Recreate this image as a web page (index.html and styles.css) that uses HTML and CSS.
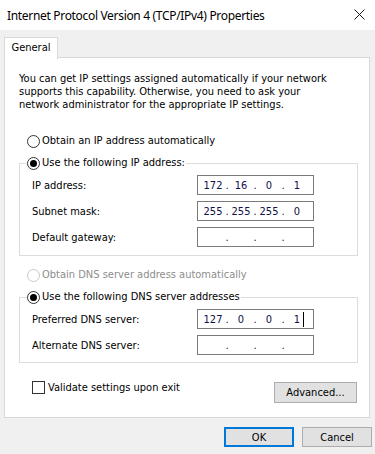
FILE: index.html
```html
<!DOCTYPE html>
<html lang="en">
<head>
<meta charset="utf-8">
<title>Internet Protocol Version 4 (TCP/IPv4) Properties</title>
<link rel="stylesheet" href="styles.css">
</head>
<body>
<div class="window">
  <div class="titlebar">
    <span class="title">Internet Protocol Version 4 (TCP/IPv4) Properties</span>
    <span class="close" aria-label="Close">
      <svg width="11" height="11" viewBox="0 0 11 11"><path d="M0.5 0.5 L10.5 10.5 M10.5 0.5 L0.5 10.5" stroke="#1a1a1a" stroke-width="1" fill="none"/></svg>
    </span>
  </div>
  <div class="body">
    <div class="tabs"><div class="tab">General</div></div>
    <div class="panel">
      <p class="desc">You can get IP settings assigned automatically if your network supports this capability. Otherwise, you need to ask your network administrator for the appropriate IP settings.</p>

      <label class="option first"><span class="radio"></span><span>Obtain an IP address automatically</span></label>

      <fieldset class="group ipgroup">
        <legend><label class="option"><span class="radio checked"></span><span>Use the following IP address:</span></label></legend>
        <div class="row"><span class="lbl">IP address:</span>
          <div class="ipbox"><span class="f">172</span><span class="d">.</span><span class="f">16</span><span class="d">.</span><span class="f">0</span><span class="d">.</span><span class="f">1</span></div></div>
        <div class="row"><span class="lbl">Subnet mask:</span>
          <div class="ipbox"><span class="f">255</span><span class="d">.</span><span class="f">255</span><span class="d">.</span><span class="f">255</span><span class="d">.</span><span class="f">0</span></div></div>
        <div class="row"><span class="lbl">Default gateway:</span>
          <div class="ipbox"><span class="f"></span><span class="d">.</span><span class="f"></span><span class="d">.</span><span class="f"></span><span class="d">.</span><span class="f"></span></div></div>
      </fieldset>

      <label class="option disabled dnsauto"><span class="radio"></span><span>Obtain DNS server address automatically</span></label>

      <fieldset class="group dnsgroup">
        <legend><label class="option"><span class="radio checked"></span><span>Use the following DNS server addresses</span></label></legend>
        <div class="row"><span class="lbl">Preferred DNS server:</span>
          <div class="ipbox"><span class="f">127</span><span class="d">.</span><span class="f">0</span><span class="d">.</span><span class="f">0</span><span class="d">.</span><span class="f">1<span class="caret"></span></span></div></div>
        <div class="row"><span class="lbl">Alternate DNS server:</span>
          <div class="ipbox"><span class="f"></span><span class="d">.</span><span class="f"></span><span class="d">.</span><span class="f"></span><span class="d">.</span><span class="f"></span></div></div>
      </fieldset>

      <div class="footer-row">
        <label class="check"><span class="box"></span><span>Validate settings upon exit</span></label>
        <button class="btn adv">Advanced...</button>
      </div>
    </div>
    <div class="actions">
      <button class="btn ok">OK</button>
      <button class="btn">Cancel</button>
    </div>
  </div>
</div>
</body>
</html>
```

FILE: styles.css
```css
* { box-sizing: border-box; }
html, body { margin: 0; padding: 0; }
body {
  width: 375px;
  height: 454px;
  background: #f0f0f0;
  font-family: "DejaVu Sans Condensed", "DejaVu Sans", sans-serif;
  font-size: 11px;
  color: #000;
  overflow: hidden;
}
.window { width: 375px; height: 454px; display: flex; flex-direction: column; }
.titlebar {
  height: 30px;
  background: #fff;
  display: flex;
  align-items: center;
  justify-content: space-between;
  padding: 0 10px 0 7px;
}
.title {
  font-family: "Noto Sans", "Open Sans", sans-serif;
  font-size: 12px;
  letter-spacing: -0.32px;
  color: #000;
}
.close { display: flex; width: 11px; height: 11px; margin-top: -2px; }
.body { padding: 7px 0 0 4px; display: flex; flex-direction: column; }
.tabs { display: flex; height: 21px; position: relative; z-index: 1; margin-bottom: -1px; }
.tab {
  width: 54px;
  height: 22px;
  background: #fff;
  border: 1px solid #d9d9d9;
  border-bottom: none;
  text-align: center;
  padding-top: 3px;
}
.panel {
  width: 366px;
  height: 361px;
  background: #fff;
  border: 1px solid #d9d9d9;
  padding: 14px 11px 0 14px;
  display: flex;
  flex-direction: column;
}
.desc { margin: 0; line-height: 13px; width: 320px; }
.option { display: flex; align-items: center; gap: 2px; height: 16px; line-height: 16px; white-space: nowrap; }
.option.first { margin: 22px 0 0 8px; }
.radio {
  width: 13px; height: 13px; border-radius: 50%;
  border: 1px solid #333; background: #fff;
  display: inline-flex; align-items: center; justify-content: center;
  flex: none;
}
.radio.checked::after {
  content: ""; width: 7px; height: 7px; border-radius: 50%; background: #000;
}
.option.disabled { color: #8d8d8d; }
.option.disabled .radio { border-color: #c8c8c8; }
.group {
  margin: 6px 0 0 0;
  border: 1px solid #dcdcdc;
  padding: 4px 0 8px 7px;
  min-width: 0;
}
.group legend { padding: 0 1px 0 0; }
.row { display: flex; align-items: center; height: 20px; margin-top: 6px; padding-left: 5px; }
.row:first-of-type { margin-top: 0; }
.lbl { width: 165px; flex: none; }
.ipbox {
  width: 117px; height: 20px;
  border: 1px solid #7a7a7a;
  background: #fff;
  display: flex; align-items: center;
  padding-left: 3px;
  color: #10104a;
}
.f { width: 24px; text-align: center; position: relative; }
.d { width: 4px; text-align: center; }
.caret {
  position: absolute;
  top: -1px;
  right: 5px;
  width: 1px; height: 15px; background: #000;
}
.dnsauto { margin: 11px 0 0 8px; }
.dnsgroup { margin-top: 6px; padding-top: 4px; padding-bottom: 7px; }
.footer-row { display: flex; justify-content: space-between; align-items: flex-start; margin-top: 16px; padding-left: 13px; }
.check { display: flex; align-items: center; gap: 3px; height: 16px; }
.check .box { width: 13px; height: 13px; border: 1px solid #333; background: #fff; }
.btn {
  font: inherit;
  color: #000;
  background: #e1e1e1;
  border: 1px solid #adadad;
  height: 21px;
  padding: 0;
}
.adv { width: 83px; margin-top: 3px; margin-right: 1px; }
.actions { display: flex; justify-content: flex-end; gap: 8px; padding: 9px 3px 0 0; }
.actions .btn { width: 70px; height: 20px; }
.actions .ok { border: 2px solid #0078d7; }
```
